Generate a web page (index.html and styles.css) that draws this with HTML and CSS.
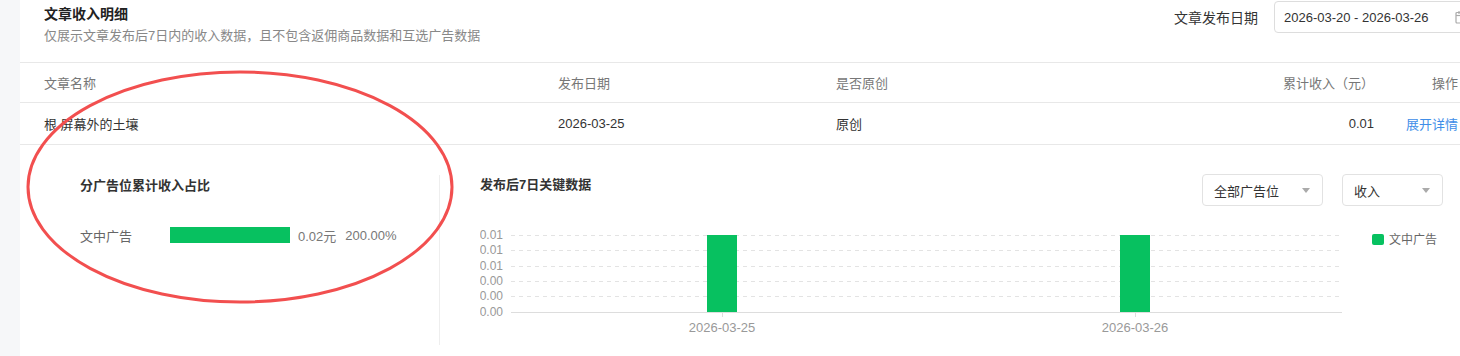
FILE: index.html
```html
<!DOCTYPE html>
<html lang="zh-CN">
<head>
<meta charset="UTF-8" />
<title>文章收入明细</title>
<link rel="stylesheet" href="styles.css">
</head>
<body>
<div class="page">
  <div class="card">
    <div class="card-head">
      <div class="head-text">
        <h2>文章收入明细</h2>
        <p>仅展示文章发布后7日内的收入数据，且不包含返佣商品数据和互选广告数据</p>
      </div>
      <div class="date-filter">
        <span class="date-label">文章发布日期</span>
        <div class="date-input">
          <span>2026-03-20 - 2026-03-26</span>
          <svg class="cal-icon" width="14" height="14" viewBox="0 0 14 14">
            <rect x="1" y="2.5" width="12" height="10.5" rx="1" fill="none" stroke="#aaa" stroke-width="1.2"/>
            <line x1="1" y1="5.5" x2="13" y2="5.5" stroke="#aaa" stroke-width="1.2"/>
            <line x1="4" y1="1" x2="4" y2="4" stroke="#aaa" stroke-width="1.2"/>
            <line x1="10" y1="1" x2="10" y2="4" stroke="#aaa" stroke-width="1.2"/>
          </svg>
        </div>
      </div>
    </div>

    <div class="table">
      <div class="row head-row">
        <div>文章名称</div>
        <div>发布日期</div>
        <div>是否原创</div>
        <div class="num">累计收入（元）</div>
        <div class="num">操作</div>
      </div>
      <div class="row data-row">
        <div>根 屏幕外的土壤</div>
        <div>2026-03-25</div>
        <div>原创</div>
        <div class="num">0.01</div>
        <div class="num"><a class="link" href="#">展开详情</a></div>
      </div>
    </div>

    <div class="detail">
      <div class="share-panel">
        <h3>分广告位累计收入占比</h3>
        <div class="share-row">
          <span class="share-name">文中广告</span>
          <div class="share-bar"></div>
          <span class="share-val">0.02元</span>
          <span class="share-val">200.00%</span>
        </div>
      </div>

      <div class="trend-panel">
        <div class="trend-head">
          <h3>发布后7日关键数据</h3>
          <div class="selects">
            <div class="select wide">全部广告位<i class="caret"></i></div>
            <div class="select">收入<i class="caret"></i></div>
          </div>
        </div>
        <svg class="chart" width="963" height="120" viewBox="0 0 963 120">
          <g stroke="#e3e3e3" stroke-width="1" stroke-dasharray="4 4">
            <line x1="31" y1="15.5" x2="862" y2="15.5"/>
            <line x1="31" y1="30.5" x2="862" y2="30.5"/>
            <line x1="31" y1="46.5" x2="862" y2="46.5"/>
            <line x1="31" y1="61.5" x2="862" y2="61.5"/>
            <line x1="31" y1="76.5" x2="862" y2="76.5"/>
          </g>
          <line x1="31" y1="92.5" x2="862" y2="92.5" stroke="#ddd"/>
          <g fill="#999" font-size="12" text-anchor="end" font-family="Liberation Sans, Arial, sans-serif">
            <text x="23" y="19">0.01</text>
            <text x="23" y="34">0.01</text>
            <text x="23" y="50">0.01</text>
            <text x="23" y="65">0.00</text>
            <text x="23" y="80">0.00</text>
            <text x="23" y="96">0.00</text>
          </g>
          <rect x="227" y="15" width="30" height="77" fill="#07c160"/>
          <rect x="640" y="15" width="30" height="77" fill="#07c160"/>
          <line x1="242.5" y1="93" x2="242.5" y2="97" stroke="#ddd"/>
          <line x1="655.5" y1="93" x2="655.5" y2="97" stroke="#ddd"/>
          <g fill="#999" font-size="13" text-anchor="middle" font-family="Liberation Sans, Arial, sans-serif">
            <text x="242" y="112">2026-03-25</text>
            <text x="655" y="112">2026-03-26</text>
          </g>
          <rect x="892" y="14" width="12" height="11" rx="2" fill="#07c160"/>
          <text x="909" y="24" fill="#666" font-size="12" font-family="Noto Sans CJK SC, sans-serif">文中广告</text>
        </svg>
      </div>
    </div>
  </div>

  <!-- red hand-drawn mark over the screenshot -->
  <svg class="mark" width="1460" height="356" viewBox="0 0 1460 356">
    <ellipse cx="240" cy="187" rx="212" ry="115" fill="none" stroke="#f24f4f" stroke-width="3"/>
  </svg>
</div>
</body>
</html>
```

FILE: styles.css
```css
* {
  margin: 0; padding: 0; box-sizing: border-box;
}
body {
  font-family: "Liberation Sans", "Noto Sans CJK SC", sans-serif;
  font-size: 13px;
  color: #333;
  background: #f6f7f9;
  overflow: hidden;
}
.page {
  position: relative;
  width: 1460px;
  height: 356px;
  overflow: hidden;
}
.card {
  margin-left: 20px;
  width: 1462px;
  height: 400px;
  background: #fff;
}
/* Head */
.card-head {
  display: flex;
  justify-content: space-between;
  align-items: flex-start;
  padding: 0 2px 0 24px;
  height: 63px;
  border-bottom: 1px solid #e8e8e8;
}
.head-text {
  padding-top: 4px;
}
.head-text h2 {
  font-size: 14px;
  font-weight: bold;
  line-height: 20px;
  color: #222;
}
.head-text p {
  margin-top: 2px;
  line-height: 20px;
  color: #888;
}
.date-filter {
  display: flex;
  align-items: center;
  margin-top: 1px;
}
.date-label {
  font-size: 14px;
  color: #333;
  margin-right: 16px;
}
.date-input {
  display: flex;
  align-items: center;
  justify-content: space-between;
  width: 206px;
  height: 32px;
  padding: 0 7px 0 9px;
  border: 1px solid #ddd;
  border-radius: 4px;
  color: #333;
}
.cal-icon {
  margin-right: 3px;
}
/* Table */
.row {
  display: grid;
  grid-template-columns: 514px 278px 300px 238px 84px;
  align-items: center;
  padding-left: 24px;
  border-bottom: 1px solid #e8e8e8;
}
.head-row {
  height: 40px;
  color: #777;
}
.data-row {
  height: 42px;
  color: #333;
}
.num {
  text-align: right;
}
.link {
  color: #3f8ee8;
  text-decoration: none;
}
/* Detail */
.detail {
  display: flex;
  padding-top: 30px;
}
.share-panel {
  width: 420px;
  height: 170px;
  padding-left: 60px;
  border-right: 1px solid #eee;
}
.share-panel h3,
.trend-head h3 {
  font-size: 13px;
  font-weight: bold;
  line-height: 22px;
  color: #333;
}
.share-row {
  display: flex;
  align-items: center;
  height: 20px;
  margin-top: 28px;
}
.share-name {
  width: 90px;
  color: #666;
}
.share-bar {
  width: 120px;
  height: 16px;
  background: #07c160;
  margin-right: 8px;
}
.share-val {
  color: #777;
  margin-right: 9px;
}
.trend-panel {
  width: 1018px;
  padding: 0 15px 0 40px;
}
.trend-head {
  display: flex;
  justify-content: space-between;
  align-items: flex-start;
  margin-top: -1px;
}
.selects {
  display: flex;
  gap: 19px;
}
.select {
  display: flex;
  align-items: center;
  justify-content: space-between;
  width: 101px;
  height: 32px;
  padding: 0 12px 0 11px;
  border: 1px solid #e2e2e2;
  border-radius: 4px;
  color: #333;
}
.select.wide {
  width: 121px;
}
.caret {
  width: 0;
  height: 0;
  border-left: 4px solid transparent;
  border-right: 4px solid transparent;
  border-top: 5px solid #aaa;
}
.chart {
  display: block;
  margin-top: 14px;
}
/* Annotation overlay */
.mark {
  position: absolute;
  left: 0;
  top: 0;
  pointer-events: none;
}
```
